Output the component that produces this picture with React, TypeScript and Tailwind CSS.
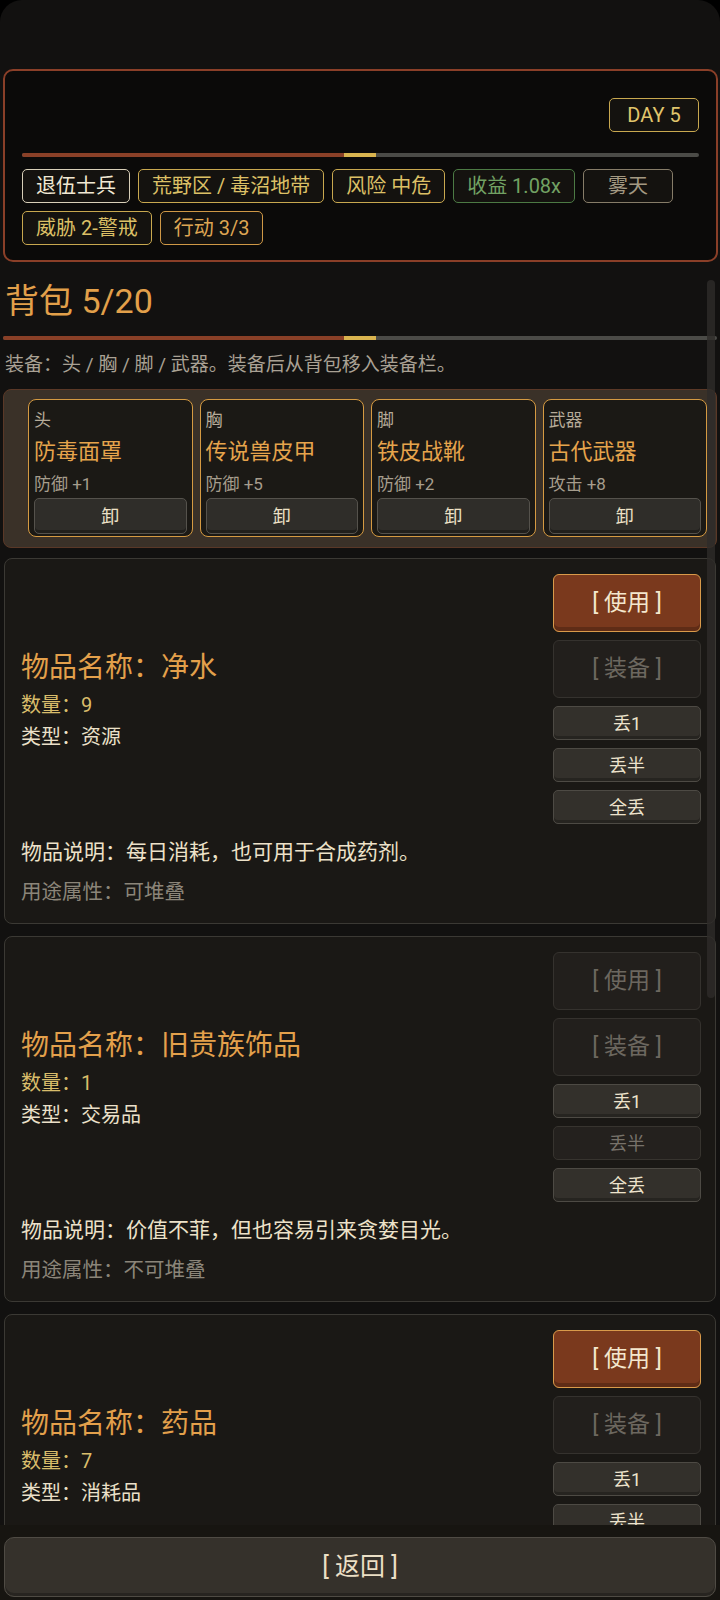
import React from "react";

type Tag = { text: string; cls: string };

const tagsRow1: Tag[] = [
  { text: "退伍士兵", cls: "border-[#d8cfb8] text-[#f1e8d3]" },
  { text: "荒野区 / 毒沼地带", cls: "border-[#c8a84f] text-[#dcc066]" },
  { text: "风险 中危", cls: "border-[#c8a84f] text-[#dcc066]" },
  { text: "收益 1.08x", cls: "border-[#4c7a44] text-[#72a163]" },
  { text: "雾天", cls: "border-[#867c68] text-[#a39982]" },
];

const tagsRow2: Tag[] = [
  { text: "威胁 2-警戒", cls: "border-[#c8a84f] text-[#dcc066]" },
  { text: "行动 3/3", cls: "border-[#cf9846] text-[#dea653]" },
];

const equipment = [
  { slot: "头", name: "防毒面罩", stat: "防御 +1" },
  { slot: "胸", name: "传说兽皮甲", stat: "防御 +5" },
  { slot: "脚", name: "铁皮战靴", stat: "防御 +2" },
  { slot: "武器", name: "古代武器", stat: "攻击 +8" },
];

type Item = {
  name: string;
  qty: number;
  type: string;
  desc: string;
  usage: string;
  canUse: boolean;
  canEquip: boolean;
  canHalf: boolean;
};

const items: Item[] = [
  {
    name: "净水",
    qty: 9,
    type: "资源",
    desc: "每日消耗，也可用于合成药剂。",
    usage: "可堆叠",
    canUse: true,
    canEquip: false,
    canHalf: true,
  },
  {
    name: "旧贵族饰品",
    qty: 1,
    type: "交易品",
    desc: "价值不菲，但也容易引来贪婪目光。",
    usage: "不可堆叠",
    canUse: false,
    canEquip: false,
    canHalf: false,
  },
  {
    name: "药品",
    qty: 7,
    type: "消耗品",
    desc: "处理伤口，恢复少量生命。",
    usage: "可堆叠",
    canUse: true,
    canEquip: false,
    canHalf: true,
  },
];

const ProgressBar = ({ red }: { red: number }) => (
  <div className="flex h-[4px] w-full overflow-hidden rounded-full bg-[#4b4b47]">
    <div className="h-full bg-[#8a4027]" style={{ width: red }} />
    <div className="h-full w-[32px] bg-[#d9b44f]" />
  </div>
);

const TagBox = ({ tag }: { tag: Tag }) => (
  <div
    className={`flex h-[34px] min-w-[90px] items-center justify-center whitespace-nowrap rounded-[5px] border-[1.5px] bg-[#14120f] px-[13px] text-[20px] leading-none ${tag.cls}`}
  >
    {tag.text}
  </div>
);

const BigButton = ({ label, active }: { label: string; active: boolean }) => (
  <div
    className={
      active
        ? "flex h-[58px] items-center justify-center rounded-[6px] border-[1.5px] border-[#d99a4a] bg-[#7a391d] text-[23px] text-[#f4e7cd] shadow-[inset_0_-4px_0_rgba(0,0,0,0.22)]"
        : "flex h-[58px] items-center justify-center rounded-[6px] border-[1.5px] border-[#35322e] bg-[#221f1c] text-[23px] text-[#6c675f]"
    }
  >
    {label}
  </div>
);

const SmallButton = ({ label, active }: { label: string; active: boolean }) => (
  <div
    className={
      active
        ? "flex h-[34px] items-center justify-center rounded-[5px] border-[1.5px] border-[#4d4a44] bg-[#33302b] text-[18px] text-[#ede3cd] shadow-[inset_0_-3px_0_rgba(0,0,0,0.25)]"
        : "flex h-[34px] items-center justify-center rounded-[5px] border-[1.5px] border-[#37342f] bg-[#24211e] text-[18px] text-[#77726a]"
    }
  >
    {label}
  </div>
);

const ItemCard = ({ item, first }: { item: Item; first: boolean }) => (
  <div
    className={`mx-[1px] ${first ? "mt-[10px]" : "mt-[12px]"} rounded-[8px] border border-[#3b3934] bg-[#1a1815] pb-[16px] pl-[16px] pr-[14px] pt-[15px]`}
  >
    <div className="flex items-center justify-between">
      <div className="pt-[3px]">
        <div className="text-[28px] leading-[36px] text-[#e3a04b]">物品名称：{item.name}</div>
        <div className="mt-[4px] text-[20px] leading-[30px] text-[#d9bd6b]">数量：{item.qty}</div>
        <div className="mt-[2px] text-[20px] leading-[30px] text-[#ebe0c9]">类型：{item.type}</div>
      </div>
      <div className="flex w-[148px] flex-col gap-[8px]">
        <BigButton label="[ 使用 ]" active={item.canUse} />
        <BigButton label="[ 装备 ]" active={item.canEquip} />
        <SmallButton label="丢1" active />
        <SmallButton label="丢半" active={item.canHalf} />
        <SmallButton label="全丢" active />
      </div>
    </div>
    <div className="mt-[12px] text-[21px] leading-[32px] text-[#ede2c9]">物品说明：{item.desc}</div>
    <div className="mt-[9px] text-[20.5px] leading-[30px] text-[#8b8579]">用途属性：{item.usage}</div>
  </div>
);

export default function App() {
  return (
    <div className="h-[1600px] w-[720px] bg-black">
      <div className="flex h-[1600px] w-[720px] flex-col overflow-hidden rounded-t-[22px] bg-[#121110] font-['Roboto','Noto_Sans_CJK_SC',sans-serif]">
        {/* status bar space */}
        <div className="h-[69px] shrink-0" />

        {/* top panel */}
        <div className="ml-[3px] mr-[2px] shrink-0 rounded-[10px] border-2 border-[#8a3f28] bg-[#0b0a09] px-[17px] pb-[15px] pt-[27px]">
          <div className="flex justify-end">
            <div className="flex h-[34px] min-w-[90px] items-center justify-center rounded-[5px] border-[1.5px] border-[#c8a84f] bg-[#14120f] px-[13px] text-[20px] leading-none text-[#e0c56c]">
              DAY 5
            </div>
          </div>
          <div className="mt-[21px]">
            <ProgressBar red={322} />
          </div>
          <div className="mt-[12px] flex flex-wrap gap-[8px]">
            {tagsRow1.map((t) => (
              <TagBox key={t.text} tag={t} />
            ))}
          </div>
          <div className="mt-[8px] flex flex-wrap gap-[8px]">
            {tagsRow2.map((t) => (
              <TagBox key={t.text} tag={t} />
            ))}
          </div>
        </div>

        {/* scroll area */}
        <div className="relative min-h-0 flex-1 overflow-hidden px-[3px] pt-[21px]">
          <div className="pl-[2px] text-[34px] leading-[36px] text-[#e2a04a]">背包 5/20</div>
          <div className="mt-[17px]">
            <ProgressBar red={341} />
          </div>
          <div className="mt-[12px] pl-[2px] text-[19px] leading-[26px] text-[#a9a194]">
            装备：头 / 胸 / 脚 / 武器。装备后从背包移入装备栏。
          </div>

          {/* equipment slots */}
          <div className="mt-[11px] rounded-[8px] border border-[#5a3827] bg-[#3a3128] pb-[10px] pl-[24px] pr-[9px] pt-[9px]">
            <div className="grid grid-cols-4 gap-[7px]">
              {equipment.map((e) => (
                <div
                  key={e.slot}
                  className="rounded-[8px] border-[1.5px] border-[#d59a42] bg-[#1b1915] px-[5px] pb-[2px] pt-[8px]"
                >
                  <div className="text-[17px] leading-[24px] text-[#b6ab99]">{e.slot}</div>
                  <div className="text-[22px] leading-[39px] text-[#e6a44c]">{e.name}</div>
                  <div className="text-[17px] leading-[27px] text-[#a69d8d]">{e.stat}</div>
                  <div className="flex h-[36px] items-center justify-center rounded-[5px] border border-[#55524c] bg-[#2f2d29] text-[18px] text-[#ede1c7] shadow-[inset_0_-3px_0_rgba(0,0,0,0.3)]">
                    卸
                  </div>
                </div>
              ))}
            </div>
          </div>

          {items.map((it, i) => (
            <ItemCard key={it.name} item={it} first={i === 0} />
          ))}

          {/* scrollbar thumb */}
          <div className="absolute right-[5px] top-[18px] z-10 h-[718px] w-[8px] rounded-full bg-[#2e2c29]/80" />
        </div>

        {/* footer */}
        <div className="shrink-0 bg-[#171511] px-[4px] pb-[3px] pt-[12px]">
          <div className="flex h-[60px] items-center justify-center rounded-[10px] border-[1.5px] border-[#4f4b44] bg-[#35312b] text-[25px] text-[#ebdfc5] shadow-[inset_0_-3px_0_rgba(0,0,0,0.25)]">
            [ 返回 ]
          </div>
        </div>
      </div>
    </div>
  );
}
